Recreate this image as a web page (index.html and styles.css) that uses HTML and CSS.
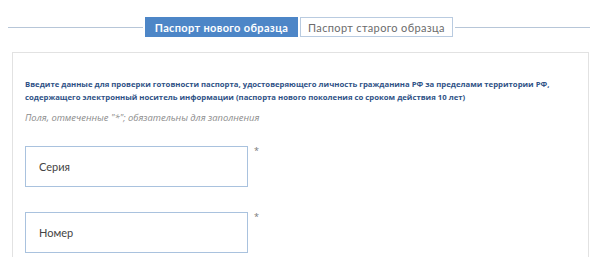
FILE: index.html
```html
<!DOCTYPE html>
<html lang="ru">
<head>
<meta charset="utf-8">
<link rel="stylesheet" href="styles.css">
</head>
<body>
<div class="tabs">
  <div class="line"></div>
  <div class="tab active">Паспорт нового образца</div>
  <div class="tab">Паспорт старого образца</div>
  <div class="line"></div>
</div>
<div class="card">
  <p class="intro">Введите данные для проверки готовности паспорта, удостоверяющего личность гражданина РФ за пределами территории РФ, содержащего электронный носитель информации (паспорта нового поколения со сроком действия 10 лет)</p>
  <p class="note">Поля, отмеченные "*"; обязательны для заполнения</p>
  <div class="field">
    <div class="input">Серия</div>
    <span class="req">*</span>
  </div>
  <div class="field">
    <div class="input">Номер</div>
    <span class="req">*</span>
  </div>
</div>
</body>
</html>
```
FILE: styles.css
```css
html, body {
  margin: 0;
  padding: 0;
  background: #fff;
  width: 600px;
  height: 257px;
  overflow: hidden;
  font-family: "Open Sans", "DejaVu Sans", sans-serif;
}
.tabs {
  display: flex;
  align-items: center;
  gap: 2px;
  padding: 17px 10px 0 8px;
}
.line {
  flex: 1;
  height: 1px;
  background: #b7c6d8;
}
.tab {
  box-sizing: border-box;
  height: 20px;
  width: 153px;
  display: flex;
  align-items: center;
  justify-content: center;
  font-family: "Lato", "Open Sans", sans-serif;
  font-size: 11px;
  letter-spacing: 0.35px;
  color: #6b6b6b;
  border: 1px solid #b9cbe0;
  background: #fff;
}
.tab.active {
  background: #4d86c7;
  border-color: #4d86c7;
  color: #fff;
  font-weight: 700;
}
.card {
  margin: 15px 0 0 12px;
  width: 577px;
  height: 205px;
  box-sizing: border-box;
  border: 1px solid #e2e2e2;
  border-bottom: none;
  padding: 25px 12px 0 12px;
}
.intro {
  margin: 0;
  font-size: 7.75px;
  line-height: 13px;
  font-weight: 700;
  color: #2f5286;
}
.note {
  margin: 7px 0 0;
  font-size: 9.4px;
  line-height: 13px;
  font-style: italic;
  color: #8c8c8c;
}
.field {
  display: flex;
  align-items: flex-start;
  margin-top: 22px;
}
.field + .field {
  margin-top: 25px;
}
.input {
  box-sizing: border-box;
  width: 223px;
  height: 41px;
  border: 1px solid #a9c2de;
  display: flex;
  align-items: center;
  padding-left: 13px;
  font-family: "Lato", "Open Sans", sans-serif;
  font-size: 11px;
  color: #444;
}
.req {
  margin-left: 6px;
  margin-top: -2px;
  font-size: 9px;
  color: #777;
}
```
